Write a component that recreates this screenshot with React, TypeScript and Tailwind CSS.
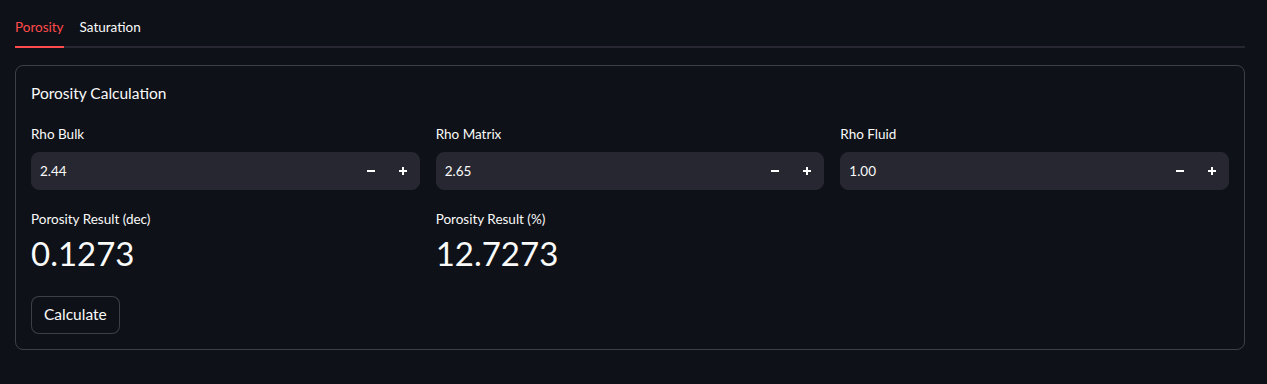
import { useState } from 'react';

type Field = { label: string; value: string };

const fields: Field[] = [
  { label: 'Rho Bulk', value: '2.44' },
  { label: 'Rho Matrix', value: '2.65' },
  { label: 'Rho Fluid', value: '1.00' },
];

function Minus() {
  return (
    <svg className="w-[10px] h-[10px]" viewBox="0 0 10 10" fill="none" stroke="white" strokeWidth={2}>
      <path d="M1 5h8" />
    </svg>
  );
}

function Plus() {
  return (
    <svg className="w-[10px] h-[10px]" viewBox="0 0 10 10" fill="none" stroke="white" strokeWidth={2}>
      <path d="M1 5h8M5 1v8" />
    </svg>
  );
}

function NumberInput({ label, value }: Field) {
  return (
    <div className="flex flex-col">
      <label className="text-[13.5px] text-[#fafafa] h-[24px] flex items-center mb-[6px]">{label}</label>
      <div className="flex items-center h-[38px] bg-[#262730] rounded-[8px] border border-[#262730]">
        <span className="flex-1 pl-[8px] text-[13.5px] text-[#fafafa]">{value}</span>
        <button className="w-[32px] h-full flex items-center justify-center"><Minus /></button>
        <button className="w-[32px] h-full flex items-center justify-center"><Plus /></button>
      </div>
    </div>
  );
}

export default function App() {
  const [tab, setTab] = useState('Porosity');

  return (
    <div className="min-h-[384px] bg-[#0e1117] text-[#fafafa] px-[15px] pt-[14px]" style={{ fontFamily: 'Lato, "Noto Sans", sans-serif' }}>
      <div className="flex gap-[16px] border-b-2 border-[#262730] w-[1230px]">
        {['Porosity', 'Saturation'].map((t) => (
          <button
            key={t}
            onClick={() => setTab(t)}
            className={`h-[34px] pb-[6px] text-[13.5px] -mb-[2px] border-b-2 ${tab === t ? 'text-[#ff4b4b] border-[#ff4b4b]' : 'text-[#fafafa] border-transparent'}`}
          >
            {t}
          </button>
        ))}
      </div>

      <div className="mt-[17px] w-[1230px] border border-[#fafafa]/20 rounded-[8px] px-[15px] pt-[16px] pb-[15px]">
        <h3 className="text-[15.5px] h-[24px] flex items-center">Porosity Calculation</h3>

        <div className="grid grid-cols-3 gap-[16px] mt-[16px]">
          {fields.map((f) => <NumberInput key={f.label} {...f} />)}
        </div>

        <div className="grid grid-cols-3 gap-[16px] mt-[18px]">
          <div>
            <p className="text-[13.5px] h-[22px] flex items-center">Porosity Result (dec)</p>
            <p className="text-[33px] leading-[47px]">0.1273</p>
          </div>
          <div>
            <p className="text-[13.5px] h-[22px] flex items-center">Porosity Result (%)</p>
            <p className="text-[33px] leading-[47px]">12.7273</p>
          </div>
        </div>

        <button className="mt-[19px] h-[38px] px-[12px] border border-[#fafafa]/20 rounded-[8px] text-[15.5px] bg-[#0e1117]">
          Calculate
        </button>
      </div>
    </div>
  );
}
